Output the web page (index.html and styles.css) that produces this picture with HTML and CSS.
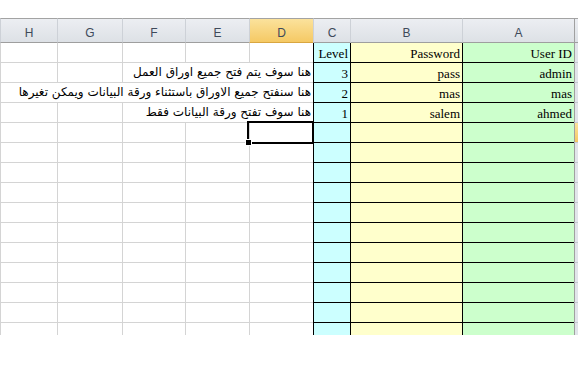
FILE: index.html
```html
<!DOCTYPE html>
<html lang="ar">
<head>
    <meta charset="UTF-8">
    <title>Users</title>
    <link rel="stylesheet" href="styles.css">
</head>
<body>
    <div class="sheet">
        <!-- column headings -->
        <div class="hd corner"></div>
        <div class="hd">A</div>
        <div class="hd">B</div>
        <div class="hd">C</div>
        <div class="hd active">D</div>
        <div class="hd">E</div>
        <div class="hd">F</div>
        <div class="hd">G</div>
        <div class="hd">H</div>

        <!-- row 1 -->
        <div class="rh"></div>
        <div class="cell green">User ID</div>
        <div class="cell yellow">Password</div>
        <div class="cell cyan">Level</div>
        <div class="cell"></div><div class="cell"></div><div class="cell"></div><div class="cell"></div><div class="cell"></div>

        <!-- row 2 -->
        <div class="rh"></div>
        <div class="cell green">admin</div>
        <div class="cell yellow">pass</div>
        <div class="cell cyan">3</div>
        <div class="cell note span3">هنا سوف يتم فتح جميع اوراق العمل</div>
        <div class="cell"></div><div class="cell"></div>

        <!-- row 3 -->
        <div class="rh"></div>
        <div class="cell green">mas</div>
        <div class="cell yellow">mas</div>
        <div class="cell cyan">2</div>
        <div class="cell note span5">هنا سنفتح جميع الاوراق باستثناء ورقة البيانات ويمكن تغيرها</div>

        <!-- row 4 -->
        <div class="rh"></div>
        <div class="cell green">ahmed</div>
        <div class="cell yellow">salem</div>
        <div class="cell cyan">1</div>
        <div class="cell note span3">هنا سوف تفتح ورقة البيانات فقط</div>
        <div class="cell"></div><div class="cell"></div>

        <!-- row 5 (selected) -->
        <div class="rh active"></div>
        <div class="cell green"></div>
        <div class="cell yellow"></div>
        <div class="cell cyan"></div>
        <div class="cell selected"></div>
        <div class="cell"></div><div class="cell"></div><div class="cell"></div><div class="cell"></div>
    </div>

    <script>
        // fill the remaining empty rows
        const sheet = document.querySelector(".sheet");
        for (let r = 6; r <= 15; r++) {
            let html = '<div class="rh"></div>';
            html += '<div class="cell green"></div><div class="cell yellow"></div><div class="cell cyan"></div>';
            for (let c = 0; c < 5; c++) html += '<div class="cell"></div>';
            sheet.insertAdjacentHTML("beforeend", html);
        }
    </script>
</body>
</html>
```

FILE: styles.css
```css
* {
    margin: 0;
    padding: 0;
    box-sizing: border-box;
}

body {
    background: #fff;
    padding-top: 18px;
}

.sheet {
    direction: rtl;
    display: grid;
    grid-template-columns: 4px 112px 112px 37px 64px 64px 63px 65px 57px;
    grid-template-rows: 25px;
    grid-auto-rows: 20px;
    width: 578px;
    height: 317px;
    overflow: hidden;
}

/* Column headings */
.hd {
    background: linear-gradient(#eceef2, #dde1e6);
    border-top: 1px solid #a3a3a3;
    border-bottom: 1px solid #9e9e9e;
    border-left: 1px solid #cdd1d7;
    font-family: "Liberation Sans", Arial, sans-serif;
    font-size: 12px;
    color: #3e4a5a;
    text-align: center;
    line-height: 24px;
    padding-top: 2px;
}

.hd.corner {
    border-left: 1px solid #a0a0a0;
}

.hd.active {
    background: linear-gradient(#fbe29c, #f5c964);
    border-bottom-color: #d9a640;
}

/* Row headings (cut off at the right edge) */
.rh {
    background: #e1e5ea;
    border-left: 1px solid #a0a0a0;
    border-bottom: 1px solid #c6cad0;
}

.rh.active {
    background: linear-gradient(#fbe29c, #f5c964);
}

/* Cells */
.cell {
    border-left: 1px solid #d4d4d4;
    border-bottom: 1px solid #d4d4d4;
    font-family: "Liberation Serif", "Times New Roman", serif;
    font-size: 13px;
    line-height: 19px;
    padding: 1px 2px 0 2px;
    text-align: right;
    white-space: nowrap;
    color: #000;
}

.green {
    background: #ccffcc;
    border-color: #000;
}

.yellow {
    background: #ffffcc;
    border-color: #000;
}

.cyan {
    background: #ccffff;
    border-color: #000;
}

.note {
    font-family: "DejaVu Sans", "Liberation Sans", sans-serif;
    font-size: 12px;
    padding-top: 0;
}

.span3 {
    grid-column: span 3;
}

.span5 {
    grid-column: span 5;
}

/* Active cell frame and fill handle */
.selected {
    position: relative;
}

.selected::after {
    content: "";
    position: absolute;
    top: -2px;
    left: -3px;
    right: 0;
    bottom: -2px;
    border: 2px solid #000;
    border-right-width: 1px;
}

.selected::before {
    content: "";
    position: absolute;
    left: -4px;
    bottom: -3px;
    width: 5px;
    height: 5px;
    background: #000;
    box-shadow: 0 0 0 1px #fff;
    z-index: 1;
}
```
